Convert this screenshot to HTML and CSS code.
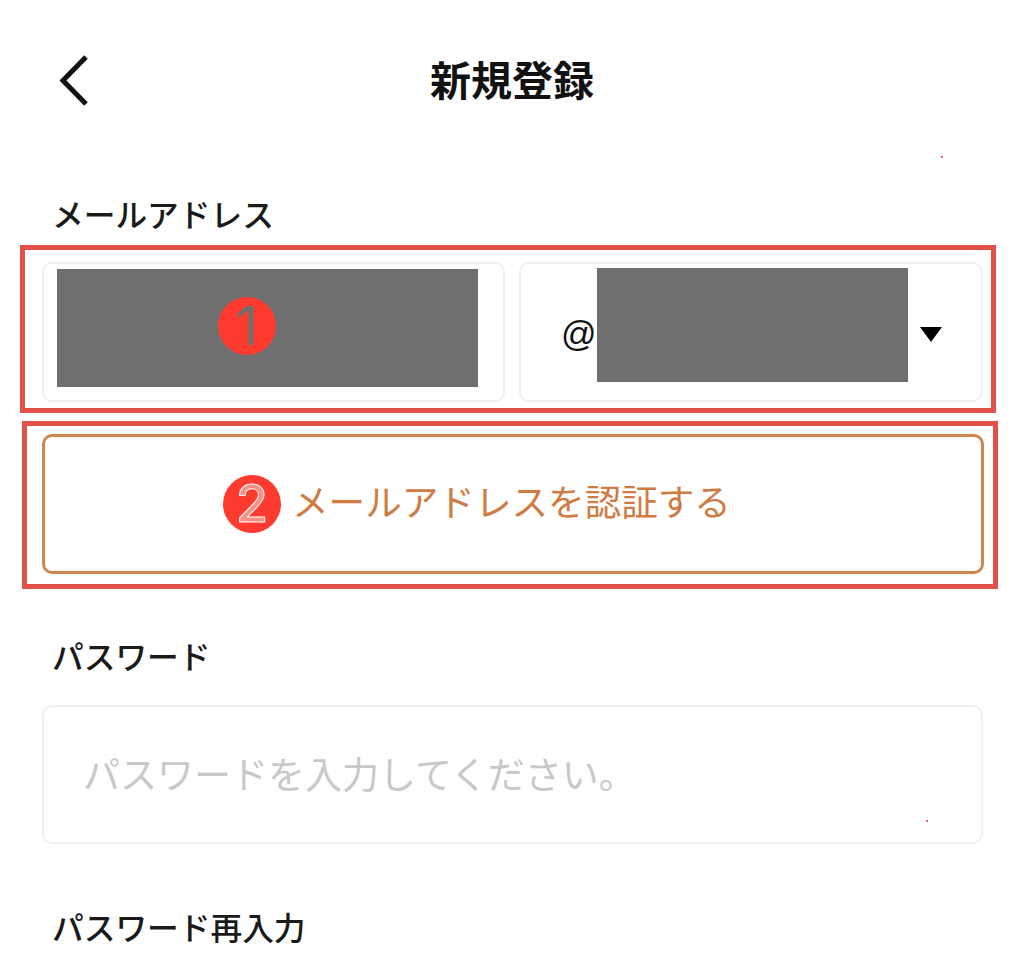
FILE: index.html
```html
<!DOCTYPE html>
<html lang="ja">

<head>
  <meta charset="UTF-8">
  <meta name="viewport" content="width=device-width, initial-scale=1.0">
  <title>新規登録</title>
  <link rel="stylesheet" href="styles.css">
</head>

<body>
  <header class="top-bar">
    <a class="back-link" href="#" aria-label="戻る">
      <svg width="32" height="52" viewBox="0 0 32 52">
        <path d="M29 2 L6 25.5 L29 49" fill="none" stroke="#111" stroke-width="5" />
      </svg>
    </a>
    <h1 class="page-title">新規登録</h1>
  </header>

  <span class="speck speck-top"></span>

  <main>
    <h2 class="field-label label-mail">メールアドレス</h2>

    <div class="mark-box mark-mail">
      <div class="mail-row">
        <div class="field mail-name">
          <div class="redact redact-name"></div>
          <span class="badge badge-one">1</span>
        </div>
        <div class="field mail-domain">
          <span class="at-sign">@</span>
          <div class="redact redact-domain"></div>
          <span class="caret"></span>
        </div>
      </div>
    </div>

    <div class="mark-box mark-verify">
      <button class="verify-btn" type="button">
        <span class="badge badge-two">2</span>
        メールアドレスを認証する
      </button>
    </div>

    <h2 class="field-label label-password">パスワード</h2>
    <div class="field password-field">
      <span class="placeholder">パスワードを入力してください。</span>
      <span class="speck speck-field"></span>
    </div>

    <h2 class="field-label label-repeat">パスワード再入力</h2>
  </main>
</body>

</html>
```

FILE: styles.css
```css
body {
  margin: 0;
  background-color: #fff;
  color: #1a1a1a;
  font-family: 'Noto Sans CJK JP', 'Liberation Sans', sans-serif;
  position: relative;
}

.top-bar {
  height: 162px;
  display: grid;
  grid-template-columns: 1fr auto 1fr;
  align-items: center;
}

.back-link {
  display: flex;
  margin-left: 57px;
}

.page-title {
  grid-column: 2;
  margin: 0 0 7px;
  font-size: 41px;
  font-weight: 700;
  line-height: 50px;
  color: #111;
}

.field-label {
  margin: 0 0 0 52px;
  font-size: 31.7px;
  font-weight: 500;
  line-height: 40px;
}

.label-mail {
  margin-top: 31px;
  margin-bottom: 12px;
}

.label-password {
  margin-top: 46px;
  margin-bottom: 30px;
}

.label-repeat {
  margin-top: 62px;
}

.mark-box {
  box-sizing: border-box;
  width: 976px;
  border: 5px solid #e0524a;
}

.mark-mail {
  height: 168px;
  margin-left: 20px;
  padding: 12px 0 0 17px;
}

.mark-verify {
  height: 168px;
  margin-top: 8px;
  margin-left: 22px;
  padding: 8px 0 0 15px;
}

.mail-row {
  display: flex;
  gap: 14px;
}

.field {
  box-sizing: border-box;
  height: 140px;
  background-color: #fff;
  border: 2px solid #f0f0f0;
  border-radius: 10px;
  position: relative;
}

.mail-name {
  width: 463px;
  padding: 4px 0 0 13px;
}

.mail-domain {
  width: 464px;
  display: flex;
  align-items: flex-start;
  padding: 4px 0 0 40px;
}

.redact {
  background-color: #6f6f6f;
}

.redact-name {
  width: 421px;
  height: 118px;
  margin-top: 1px;
}

.redact-domain {
  width: 311px;
  height: 114px;
}

.at-sign {
  width: 36px;
  margin-top: 44px;
  font-family: 'Liberation Sans', sans-serif;
  font-size: 35px;
  line-height: 44px;
  color: #111;
}

.caret {
  margin: 59px 0 0 12px;
  border-top: 15px solid #000;
  border-left: 11px solid transparent;
  border-right: 11px solid transparent;
}

.badge {
  position: absolute;
  width: 58px;
  height: 58px;
  display: flex;
  align-items: center;
  justify-content: center;
  border-radius: 50%;
  background-color: #ff3b30;
  font-family: 'Inter', sans-serif;
  line-height: 58px;
}

.badge-one {
  left: 174px;
  top: 33px;
  color: #6f6f6f;
  font-size: 54px;
  font-weight: 400;
}

.badge-two {
  left: 178px;
  top: 38px;
  color: #ff8d85;
  font-size: 52px;
  font-weight: 500;
  -webkit-text-stroke: 1px #fff;
}

.verify-btn {
  box-sizing: border-box;
  width: 942px;
  height: 140px;
  padding: 0 0 6px 247px;
  display: block;
  text-align: left;
  background-color: #fff;
  border: 3px solid #d0884f;
  border-radius: 10px;
  color: #d07b42;
  font-family: inherit;
  font-size: 36.6px;
  line-height: 50px;
  position: relative;
}

.password-field {
  width: 941px;
  height: 139px;
  margin-left: 42px;
  display: flex;
  align-items: center;
  padding: 0 0 4px 39px;
}

.placeholder {
  font-size: 37px;
  color: #c8c8c8;
}

.speck {
  position: absolute;
  width: 2px;
  height: 2px;
  background-color: #e8636a;
}

.speck-top {
  left: 941px;
  top: 156px;
}

.speck-field {
  left: 882px;
  top: 113px;
}
```
